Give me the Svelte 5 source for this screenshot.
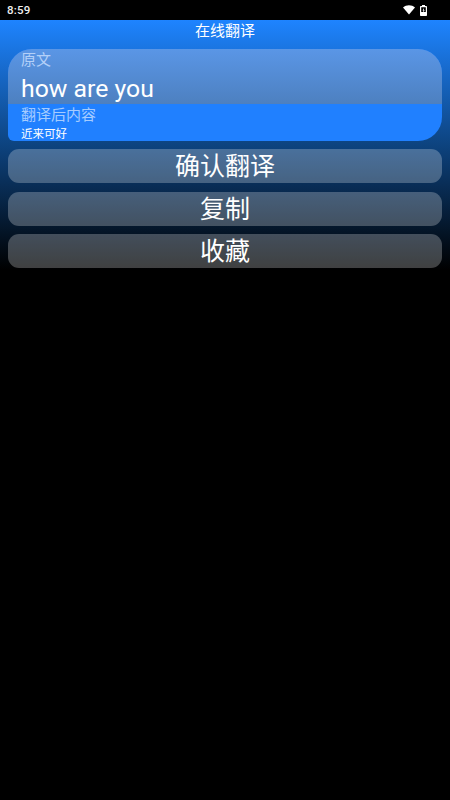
<script>
  const buttons = ['确认翻译', '复制', '收藏'];
</script>

<div class="page">
  <div class="status">
    <span class="time">8:59</span>
    <div class="icons">
      <svg class="wifi" width="12" height="10" viewBox="0 0 12 10"><path d="M0 2.6C3.4-.5 8.6-.5 12 2.6L6 9.600z" fill="#fff"/></svg>
      <svg class="battery" width="7" height="11" viewBox="0 0 7 11"><path fill-rule="evenodd" d="M2 0h3v1h1.200q.8 0 .8.8v8.400q0 .8-.8.800H.8q-.8 0-.8-.8V1.800q0-.8.800-.8H2zM1.200 2.200v4.800h4.600V2.200z" fill="#fff"/><path d="M3.900 3 2.500 5.600h.8V7.800L4.700 5.200h-.8z" fill="#fff"/></svg>
    </div>
  </div>
  <main class="content">
    <h1>在线翻译</h1>
    <section class="card">
      <div class="source">
        <div class="label">原文</div>
        <div class="input">how are you</div>
      </div>
      <div class="result">
        <div class="label">翻译后内容</div>
        <div class="output">近来可好</div>
      </div>
    </section>
    <div class="actions">
      {#each buttons as b}
        <button>{b}</button>
      {/each}
    </div>
  </main>
</div>

<style>
  :global(body) { margin: 0; background: #000; }
  .page {
    width: 450px; height: 800px; background: #000; color: #fff; overflow: hidden;
    font-family: Roboto, "Noto Sans CJK SC", sans-serif;
  }
  .status {
    height: 20px; display: flex; justify-content: space-between; align-items: center;
    padding: 0 23px 0 7px; box-sizing: border-box;
  }
  .time { font-size: 11.5px; font-weight: 500; color: #eee; letter-spacing: .2px; }
  .icons { display: flex; align-items: center; gap: 5px; }
  .content {
    height: 250px;
    background: linear-gradient(#1e84ff 0, #0d437f 125px, #000 250px);
    padding: 0 8px; box-sizing: border-box;
  }
  h1 { margin: 0; height: 29px; font-size: 15px; line-height: 23px; font-weight: 400; text-align: center; }
  .card { height: 92px; background: #2080ff; border-radius: 24px 24px 24px 6px; overflow: hidden; }
  .source {
    height: 55px; box-sizing: border-box; padding: 1px 13px 0;
    background: linear-gradient(#5a96e6, #4d80c0);
  }
  .label { font-size: 15px; line-height: 21px; color: #b4d0f8; }
  .input { font-size: 24.800px; line-height: 33px; margin-top: 1px; }
  .result { padding: 1px 13px 0; }
  .result .label { color: #a6ccff; }
  .output { font-size: 11.500px; line-height: 15px; margin-top: 1px; }
  .actions { display: flex; flex-direction: column; gap: 8.500px; margin-top: 8px; }
  button {
    height: 34px; padding: 2px 0 0; border: 0; border-radius: 11px; color: #fff;
    font: 400 25px/32px Roboto, "Noto Sans CJK SC", sans-serif;
    background: rgba(255, 255, 255, .25);
  }
</style>
